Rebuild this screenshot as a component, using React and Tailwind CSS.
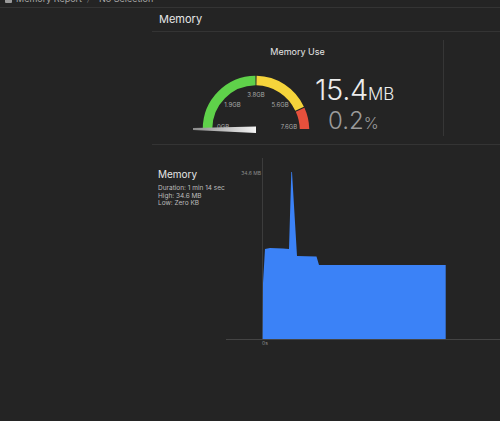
import React from "react";

function Gauge() {
  return (
    <svg width="125" height="66" viewBox="0 0 125 66" className="block">
      <defs>
        <linearGradient id="needle" x1="0" x2="1" y1="0" y2="0">
          <stop offset="0" stopColor="#8a8a8a" />
          <stop offset="1" stopColor="#f4f4f4" />
        </linearGradient>
      </defs>
      <path d="M17.5 58 A48.5 48.5 0 0 1 65.5 9.5" fill="none" stroke="#5fd14a" strokeWidth="9.5" />
      <path d="M66.5 9.5 A48.5 48.5 0 0 1 109.6 37.7" fill="none" stroke="#f5d43b" strokeWidth="9.5" />
      <path d="M110.1 38.7 A48.5 48.5 0 0 1 114.5 58" fill="none" stroke="#e6503c" strokeWidth="9.5" />
      <g fill="#a9a9a9" fontSize="6" textAnchor="middle" fontFamily="Inter, sans-serif">
        <text x="42.5" y="36">1.9GB</text>
        <text x="66" y="26">3.8GB</text>
        <text x="90" y="36">5.6GB</text>
        <text x="99" y="58">7.6GB</text>
        <text x="33" y="58">0GB</text>
      </g>
      <polygon points="3,57 66,55.5 66,62 3,59" fill="url(#needle)" />
    </svg>
  );
}

function Chart() {
  return (
    <svg width="280" height="200" viewBox="220 155 280 200" className="block">
      <line x1="262.5" y1="158" x2="262.5" y2="339" stroke="#3c3c3c" strokeWidth="1" />
      <line x1="226" y1="339.5" x2="500" y2="339.5" stroke="#444" strokeWidth="1" />
      <text x="261" y="174.5" fill="#8c8c8c" fontSize="5" textAnchor="end" fontFamily="Inter, sans-serif">34.6 MB</text>
      <path
        d="M262.7 339 L263 283 L265 249 L270 248 L283 248.5 L289 249 L291.3 172 L292 172 L297 256 L316.5 256.5 L319 265 L445.7 265 L445.7 339 Z"
        fill="#3b82f7"
      />
      <text x="262" y="345" fill="#8c8c8c" fontSize="5" fontFamily="Inter, sans-serif">0s</text>
    </svg>
  );
}

export default function App() {
  return (
    <div className="w-[500px] h-[421px] overflow-hidden bg-[#242424] text-[#e6e6e6] font-['Inter',sans-serif]">
      <div className="h-[8px] overflow-hidden border-b border-[#343434]">
        <div className="-mt-[7px] flex items-center gap-1 pl-[5px] text-[9px] leading-[12px] text-[#a8a8a8]">
          <span className="inline-block w-[7px] h-[7px] rounded-[1px] bg-[#9a9a9a]" />
          <span>Memory Report</span>
          <span>〉</span>
          <span>No Selection</span>
        </div>
      </div>
      <div className="flex">
        <div className="w-[152px] shrink-0" />
        <div className="flex-1">
          <div className="h-[24px] flex items-center pl-[7px] text-[11px] border-b border-[#343434]">
            Memory
          </div>
          <div className="h-[113px] flex border-b border-[#343434] py-[8px]">
            <div className="w-[292px] border-r border-[#363636] flex flex-col">
              <div className="text-center text-[9px] leading-[12px] mt-[6px]">Memory Use</div>
              <div className="flex items-start mt-[17px] ml-[38px]">
                <div className="-mt-[4px]">
                  <Gauge />
                </div>
                <div className="flex flex-col">
                  <div className="flex items-baseline font-light text-[#ececec] leading-none">
                    <span className="text-[29px] tracking-[-0.3px]">15.4</span>
                    <span className="text-[17px]">MB</span>
                  </div>
                  <div className="flex items-baseline font-light text-[#9b9b9b] leading-none ml-[13px] mt-[5px]">
                    <span className="text-[24px]">0.2</span>
                    <span className="text-[16px]">%</span>
                  </div>
                </div>
              </div>
            </div>
          </div>
          <div className="flex">
            <div className="w-[68px] shrink-0 pl-[6px] pt-[23px]">
              <div className="text-[10px] leading-[13px]">Memory</div>
              <div className="mt-[4px] text-[6.5px] leading-[7.5px] text-[#bdbdbd] whitespace-nowrap">
                <div>Duration: 1 min 14 sec</div>
                <div>High: 34.6 MB</div>
                <div>Low: Zero KB</div>
              </div>
            </div>
            <div className="pt-[10px]">
              <Chart />
            </div>
          </div>
        </div>
      </div>
    </div>
  );
}
